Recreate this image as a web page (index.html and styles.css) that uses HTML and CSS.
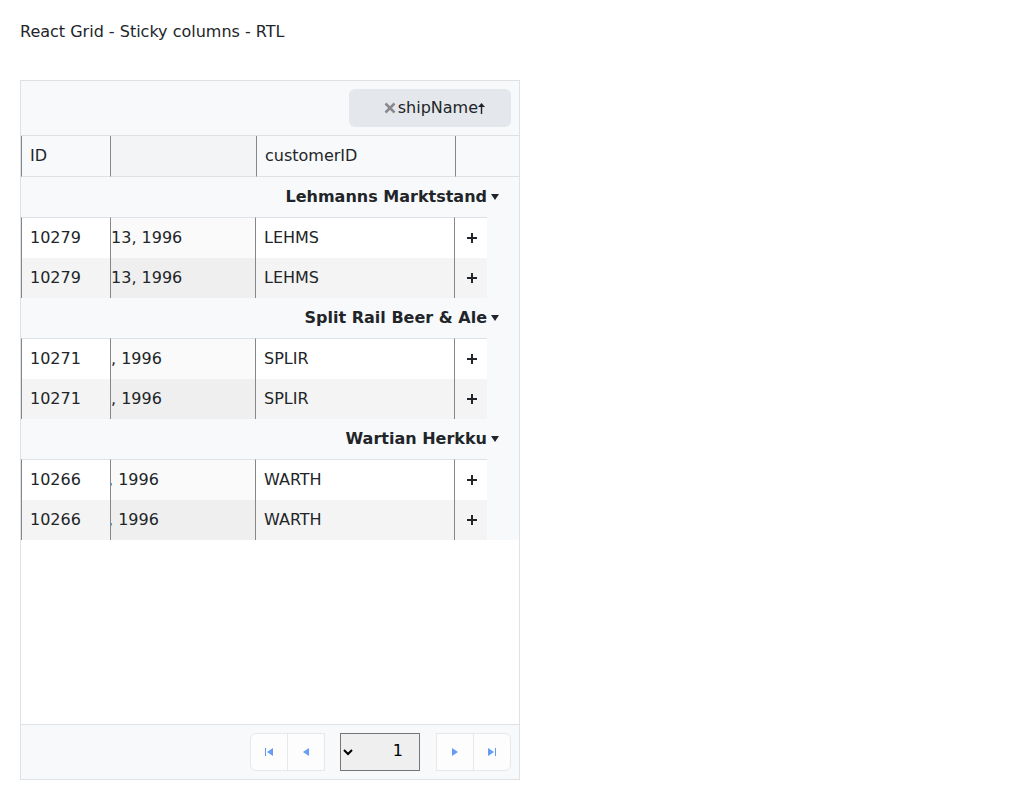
FILE: index.html
```html
<!DOCTYPE html>
<html lang="en">
<head>
<meta charset="utf-8">
<meta name="viewport" content="width=device-width, initial-scale=1">
<title>React Grid - Sticky columns - RTL</title>
<link rel="stylesheet" href="styles.css">
</head>
<body>
<p class="title">React Grid - Sticky columns - RTL</p>
<main class="grid" dir="rtl">
  <div class="group-panel">
    <div class="chip">
      <svg class="chip-sort" viewBox="0 0 7 11" aria-hidden="true"><path d="M3.5 0L7 4H4.2V11H2.8V4H0z"/></svg>
      <span>shipName</span>
      <button class="chip-remove" type="button" aria-label="Remove shipName"><svg viewBox="0 0 12 12"><path d="M1.5 1.5l9 9M10.5 1.5l-9 9"/></svg></button>
    </div>
  </div>
  <table class="head">
    <colgroup><col class="col-lead"><col class="col-customer"><col><col class="col-id"></colgroup>
    <thead><tr><th></th><th scope="col">customerID</th><th class="sorted"></th><th scope="col">ID</th></tr></thead>
  </table>
  <div class="content">
    <table class="body">
      <colgroup><col class="col-group"><col class="col-expand"><col class="col-customer"><col><col class="col-id"></colgroup>
      <tbody>
        <tr class="group"><td colspan="5"><button type="button"><svg viewBox="0 0 8 6" aria-hidden="true"><path d="M0 0h8L4 6z"/></svg><span>Lehmanns Marktstand</span></button></td></tr>
        <tr class="row first"><td class="indent"></td><td class="expand"><button type="button" aria-label="Expand"><svg viewBox="0 0 10 10"><path d="M4 0h2v4h4v2H6v4H4V6H0V4h4z"/></svg></button></td><td>LEHMS</td><td class="sorted"><span>13, 1996</span></td><td>10279</td></tr>
        <tr class="row alt"><td class="indent"></td><td class="expand"><button type="button" aria-label="Expand"><svg viewBox="0 0 10 10"><path d="M4 0h2v4h4v2H6v4H4V6H0V4h4z"/></svg></button></td><td>LEHMS</td><td class="sorted"><span>13, 1996</span></td><td>10279</td></tr>
      </tbody>
      <tbody>
        <tr class="group"><td colspan="5"><button type="button"><svg viewBox="0 0 8 6" aria-hidden="true"><path d="M0 0h8L4 6z"/></svg><span>Split Rail Beer &amp; Ale</span></button></td></tr>
        <tr class="row first"><td class="indent"></td><td class="expand"><button type="button" aria-label="Expand"><svg viewBox="0 0 10 10"><path d="M4 0h2v4h4v2H6v4H4V6H0V4h4z"/></svg></button></td><td>SPLIR</td><td class="sorted"><span>, 1996</span></td><td>10271</td></tr>
        <tr class="row alt"><td class="indent"></td><td class="expand"><button type="button" aria-label="Expand"><svg viewBox="0 0 10 10"><path d="M4 0h2v4h4v2H6v4H4V6H0V4h4z"/></svg></button></td><td>SPLIR</td><td class="sorted"><span>, 1996</span></td><td>10271</td></tr>
      </tbody>
      <tbody>
        <tr class="group"><td colspan="5"><button type="button"><svg viewBox="0 0 8 6" aria-hidden="true"><path d="M0 0h8L4 6z"/></svg><span>Wartian Herkku</span></button></td></tr>
        <tr class="row first"><td class="indent"></td><td class="expand"><button type="button" aria-label="Expand"><svg viewBox="0 0 10 10"><path d="M4 0h2v4h4v2H6v4H4V6H0V4h4z"/></svg></button></td><td>WARTH</td><td class="sorted"><span class="under">, 1996</span></td><td>10266</td></tr>
        <tr class="row alt"><td class="indent"></td><td class="expand"><button type="button" aria-label="Expand"><svg viewBox="0 0 10 10"><path d="M4 0h2v4h4v2H6v4H4V6H0V4h4z"/></svg></button></td><td>WARTH</td><td class="sorted"><span class="under">, 1996</span></td><td>10266</td></tr>
      </tbody>
    </table>
  </div>
  <nav class="pager" aria-label="Pages">
    <div class="nav">
      <button type="button" disabled aria-label="First page"><svg viewBox="0 0 8 8"><path d="M7 0h1v8H7zM0 0l6 4-6 4z"/></svg></button>
      <button type="button" disabled aria-label="Previous page"><svg viewBox="0 0 8 8"><path d="M1 0l6 4-6 4z"/></svg></button>
    </div>
    <select aria-label="Page"><option>1</option></select>
    <div class="nav">
      <button type="button" disabled aria-label="Next page"><svg viewBox="0 0 8 8"><path d="M7 0v8L1 4z"/></svg></button>
      <button type="button" disabled aria-label="Last page"><svg viewBox="0 0 8 8"><path d="M0 0h1v8H0zM8 0v8L2 4z"/></svg></button>
    </div>
  </nav>
</main>
</body>
</html>
```
FILE: styles.css
```css
* { box-sizing: border-box; }
body {
  margin: 0;
  padding: 20px;
  background: #fff;
  color: #212529;
  font: 16px/24px "DejaVu Sans", sans-serif;
}
button { margin: 0; padding: 0; border: 0; background: none; color: inherit; font: inherit; }
svg { display: block; fill: currentColor; }
.title { margin: 0 0 36px; }
.grid {
  display: flex;
  flex-direction: column;
  max-width: 500px;
  min-height: 700px;
  border: 1px solid #dee2e6;
}
.group-panel {
  display: flex;
  padding: 8px;
  background: #f8f9fb;
  border-bottom: 1px solid #dee2e6;
}
.chip {
  display: flex;
  align-items: center;
  height: 38px;
  padding: 0 26px 0 35px;
  border-radius: 6px;
  background: #e4e7eb;
}
.chip-sort { width: 7px; height: 11px; }
.chip-remove { padding: 0 2px 0 0; color: #87898e; }
.chip-remove svg { width: 12px; height: 12px; fill: none; stroke: currentColor; stroke-width: 2.5; }
table { width: 100%; table-layout: fixed; border-collapse: separate; border-spacing: 0; }
.col-lead { width: 64px; }
.col-group { width: 32px; }
.col-expand { width: 33px; }
.col-customer { width: 199px; }
.col-id { width: 89px; }
th, td { padding: 8px; text-align: left; font-weight: 400; overflow: hidden; white-space: nowrap; }
th {
  height: 41px;
  background: #f8f9fb;
  border-left: 1px solid #86878a;
  border-bottom: 1px solid #dee2e6;
}
th.sorted { background: #f3f4f6; }
.content { flex: 1; }
.group td { padding: 8px 20px 8px 8px; background: #f8f9fb; text-align: right; font-weight: 700; }
.group button { display: flex; align-items: center; gap: 4px; }
.group svg { width: 8px; height: 6px; }
.row td { background: #fff; border-left: 1px solid #86878a; }
.row.alt td { background: #f4f4f4; }
.row.first td { border-top: 1px solid #dee2e6; }
.row td.indent { background: #f8f9fb; border: 0; }
.row td.expand { padding: 0 8px 0 12px; }
.expand svg { width: 10px; height: 10px; }
.row td.sorted { padding: 8px 0; background: #fafafa; direction: ltr; }
.row.alt td.sorted { background: #efefef; }
.under { margin-left: -3px; }
.pager {
  display: flex;
  align-items: center;
  padding: 8px;
  background: #f8f9fb;
  border-top: 1px solid #dee2e6;
}
.nav { display: flex; flex-direction: row-reverse; direction: ltr; }
.nav button {
  display: flex;
  align-items: center;
  justify-content: center;
  width: 38px;
  height: 38px;
  border: 1px solid #e5e9ec;
  background: #fdfdfd;
  color: #659cf5;
}
.nav button + button { margin-right: -1px; }
.nav:first-child button:first-child { border-radius: 0 6px 6px 0; }
.nav:last-child button:last-child { border-radius: 6px 0 0 6px; }
.nav svg { width: 8px; height: 8px; }
select {
  width: 80px;
  height: 38px;
  margin: 0 16px 0 15px;
  padding: 0 12px 3px 0;
  border: 1px solid #767676;
  border-radius: 0;
  background: #efefef;
  color: #000;
  font: inherit;
}
```
